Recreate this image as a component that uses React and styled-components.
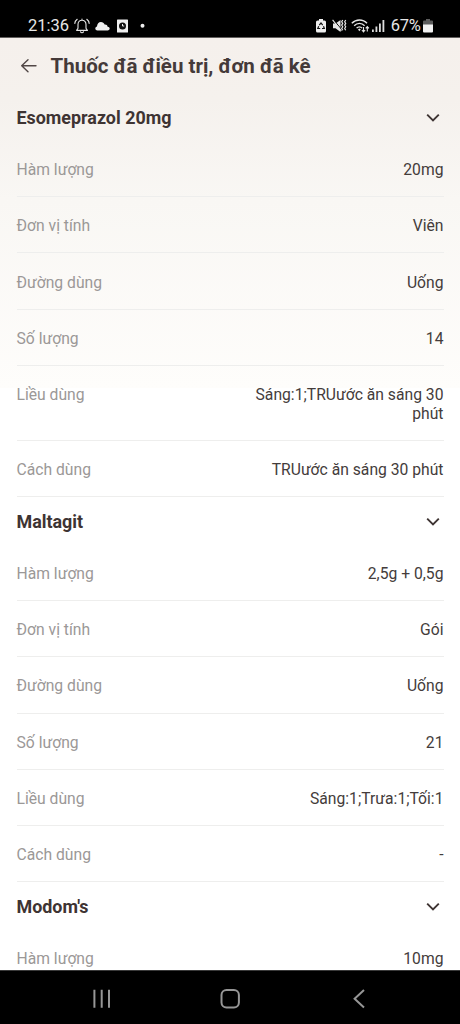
import React from 'react';
import styled, { createGlobalStyle } from 'styled-components';

const GlobalStyle = createGlobalStyle`
  body {
    margin: 0;
    background: #fff;
    font-family: Roboto, sans-serif;
  }
  * {
    box-sizing: border-box;
  }
`;

const Screen = styled.div`
  display: flex;
  flex-direction: column;
  height: 1024px;
  overflow: hidden;
  background: linear-gradient(#f5f0ec 38px, #f5f1ed 100px, #f9f7f4 200px, #fefdfb 388px, #fff 388px);
`;

const StatusBar = styled.div`
  display: flex;
  flex: none;
  justify-content: space-between;
  height: 38px;
  padding: 15px 27.5px 0 28px;
  background: #000;
  border-bottom: 1px solid #625f5e;
  color: #e6e6e6;
`;

const StatusGroup = styled.div`
  display: flex;
  align-items: center;
  height: 22px;
`;

const StatusText = styled.span`
  margin-left: ${({ $gap }) => $gap || 0}px;
  font-size: 16.5px;
  line-height: 22px;
  letter-spacing: ${({ $spacing }) => $spacing || '0'};
`;

const StatusIcon = styled.svg`
  flex: none;
  margin-left: ${({ $gap }) => $gap || 0}px;
`;

const TitleBar = styled.header`
  display: flex;
  flex: none;
  align-items: center;
  height: 55.3px;
  padding: 1px 16px 0 20px;
`;

const Title = styled.h1`
  margin: 0 0 0 12.5px;
  color: #443a39;
  font-size: 20.5px;
  font-weight: 700;
  line-height: 24px;
  white-space: nowrap;
`;

const List = styled.main`
  flex: 1;
  min-height: 0;
  overflow: hidden;
  padding: 0 16.5px;
`;

const SectionHeader = styled.div`
  display: flex;
  align-items: center;
  justify-content: space-between;
  height: 47.5px;
  padding: 2.4px 3.5px 0 0;
`;

const SectionName = styled.h2`
  margin: 0;
  color: #3e3433;
  font-size: 17.9px;
  font-weight: 700;
  line-height: 20px;
`;

const Row = styled.div`
  display: flex;
  justify-content: space-between;
  padding: 20.2px 0 16.4px;
  border-bottom: 1px solid #eeeeed;
  font-size: 15.7px;
  line-height: 18.7px;
`;

const Label = styled.span`
  color: #9b9897;
`;

const Value = styled.span`
  max-width: 200px;
  color: #443c3b;
  text-align: right;
`;

const NavBar = styled.nav`
  display: flex;
  flex: none;
  align-items: center;
  justify-content: space-between;
  height: 54px;
  padding: 2px 90px 0;
  background: #000;
  border-top: 1px solid #3a3a3a;
`;

const medicines = [
  {
    name: 'Esomeprazol 20mg',
    rows: [
      ['Hàm lượng', '20mg'],
      ['Đơn vị tính', 'Viên'],
      ['Đường dùng', 'Uống'],
      ['Số lượng', '14'],
      ['Liều dùng', 'Sáng:1;TRUước ăn sáng 30 phút'],
      ['Cách dùng', 'TRUước ăn sáng 30 phút'],
    ],
  },
  {
    name: 'Maltagit',
    rows: [
      ['Hàm lượng', '2,5g + 0,5g'],
      ['Đơn vị tính', 'Gói'],
      ['Đường dùng', 'Uống'],
      ['Số lượng', '21'],
      ['Liều dùng', 'Sáng:1;Trưa:1;Tối:1'],
      ['Cách dùng', '-'],
    ],
  },
  {
    name: "Modom's",
    rows: [['Hàm lượng', '10mg']],
  },
];

const BellIcon = () => (
  <StatusIcon $gap={5} width="16" height="16" viewBox="0 0 16 16" fill="none" stroke="#e6e6e6" strokeWidth="1.1" strokeLinecap="round" strokeLinejoin="round">
    <path d="M2.6 12.4h10.8L12 10.3V6.6C12 4 10.4 2.3 8 2.3S4 4 4 6.6v3.7zM8 2.3V1M6.5 13.7c.5 1.3 2.5 1.3 3 0" />
    <path d="M3.2 1.3C1.7 2.4.9 3.7.8 5.4M12.8 1.3c1.5 1.1 2.3 2.4 2.4 4.1" />
  </StatusIcon>
);

const CloudIcon = () => (
  <StatusIcon $gap={5} width="15" height="16" viewBox="0 0 15 16" fill="#eeeeee">
    <path d="M2.5 12.5C1 12.5.3 11.6.3 10.6S1.1 8.8 2 8.6C2.1 5.8 3.7 4 5.9 4c1.8 0 3.1 1 3.7 2.6 1.7-.2 2.8.7 3 2.1 1.3.1 2.1.9 2.1 1.9s-.8 1.9-2.1 1.9z" />
  </StatusIcon>
);

const ClockCardIcon = () => (
  <StatusIcon $gap={6.5} width="11" height="16" viewBox="0 0 11 16">
    <rect y="1.5" width="11" height="13" rx=".6" fill="#eeeeee" />
    <circle cx="5.5" cy="8" r="3.5" fill="#111" />
    <path d="M5.5 6v2h1.7" fill="none" stroke="#eee" strokeWidth="1" />
  </StatusIcon>
);

const DotIcon = () => (
  <StatusIcon $gap={12} width="5" height="16" viewBox="0 0 5 16">
    <circle cx="2.5" cy="7.8" r="2" fill="#eeeeee" />
  </StatusIcon>
);

const RecycleBatteryIcon = () => (
  <StatusIcon width="10" height="16" viewBox="0 0 10 16">
    <path d="M3 1h4v1.4h1.5q1.5 0 1.5 1.5v9q0 1.5-1.5 1.5h-7Q0 14.4 0 12.9v-9q0-1.5 1.5-1.5H3z" fill="#eeeeee" />
    <path d="M3.3 7.2 5 4.9l1.7 2.3M7.5 8.3l.8 2.2H6M4.2 10.5H1.8l.9-2.2" fill="none" stroke="#111" strokeWidth="1.2" />
  </StatusIcon>
);

const MuteVibrateIcon = () => (
  <StatusIcon $gap={6} width="15" height="16" viewBox="0 0 15 16" fill="none" stroke="#e6e6e6">
    <path d="M1 5.5h2.5L8.5 2v12l-5-3.7H1z" fill="#e6e6e6" stroke="none" />
    <path d="M1.7 1.8 10 12" stroke="#000" strokeWidth="1" />
    <path d="M.6 1.9 9.4 13" strokeWidth="1.1" />
    <path d="m10.7 2-1 1.7 1 1.7-1 1.7 1 1.7-1 1.7 1 1.7M13.7 2l-1 1.7 1 1.7-1 1.7 1 1.7-1 1.7 1 1.7" strokeWidth="1.2" />
  </StatusIcon>
);

const WifiIcon = () => (
  <StatusIcon $gap={4} width="19" height="16" viewBox="0 0 19 16" fill="none" stroke="#e6e6e6" strokeWidth="1.4">
    <path d="M.8 5.3C5 .9 12 .9 16 5.3M3.2 7.7c2.9-3.1 7.5-3.1 10.4 0M5.6 10.1c1.5-1.7 4-1.7 5.5 0" />
    <path d="m7 11.5 1.4-1 1.4 1-1.4 1.7z" fill="#e6e6e6" stroke="none" />
    <path d="M12.5 9v4.5M10.9 12l1.6 1.8 1.6-1.8M16.3 13.5V8.7M14.7 10.4l1.6-1.8 1.6 1.8" strokeWidth="1.1" />
  </StatusIcon>
);

const SignalIcon = () => (
  <StatusIcon $gap={2} width="13" height="16" viewBox="0 0 13 16" fill="#dddddd">
    <rect x="0" y="11.5" width="1.8" height="2.5" />
    <rect x="3.5" y="8.5" width="1.8" height="5.5" />
    <rect x="7" y="5.5" width="1.8" height="8.5" />
    <rect x="10.5" y="2" width="1.8" height="12" />
  </StatusIcon>
);

const BatteryIcon = () => (
  <StatusIcon $gap={2} width="10" height="16" viewBox="0 0 10 16">
    <path d="M3 1h4v1.5h2q1 0 1 1V7H0V3.5q0-1 1-1h2z" fill="#5c5c5c" />
    <path d="M0 6.5h10v6.9q0 1-1 1H1q-1 0-1-1z" fill="#f2f2f2" />
  </StatusIcon>
);

const BackArrow = () => (
  <svg width="18" height="18" viewBox="0 0 18 18" fill="none" stroke="#514746" strokeWidth="1.4" strokeLinecap="round" strokeLinejoin="round">
    <path d="M16 8.7H1.7M8 2.7 1.7 8.7l6.3 6" />
  </svg>
);

const Chevron = () => (
  <svg width="14" height="10" viewBox="0 0 14 10" fill="none" stroke="#3e3433" strokeWidth="1.9">
    <path d="m1.2 1.6 5.8 5.8 5.8-5.8" />
  </svg>
);

const RecentsIcon = () => (
  <svg width="24" height="24" viewBox="0 0 24 24" stroke="#969696" strokeWidth="2">
    <path d="M4.4 2.7v18M11.7 2.7v18M19 2.7v18" />
  </svg>
);

const HomeIcon = () => (
  <svg width="24" height="24" viewBox="0 0 24 24" fill="none" stroke="#969696" strokeWidth="2">
    <rect x="3.5" y="2.9" width="17.4" height="17.6" rx="5" />
  </svg>
);

const NavBackIcon = () => (
  <svg width="24" height="24" viewBox="0 0 24 24" fill="none" stroke="#969696" strokeWidth="2">
    <path d="M18 3.1 8.6 11.8 18 20.5" />
  </svg>
);

const Medicine = ({ name, rows }) => (
  <section>
    <SectionHeader>
      <SectionName>{name}</SectionName>
      <Chevron />
    </SectionHeader>
    {rows.map(([label, value]) => (
      <Row key={label}>
        <Label>{label}</Label>
        <Value>{value}</Value>
      </Row>
    ))}
  </section>
);

const App = () => {
  return (
    <>
      <GlobalStyle />
      <Screen>
        <StatusBar>
          <StatusGroup>
            <StatusText>21:36</StatusText>
            <BellIcon />
            <CloudIcon />
            <ClockCardIcon />
            <DotIcon />
          </StatusGroup>
          <StatusGroup>
            <RecycleBatteryIcon />
            <MuteVibrateIcon />
            <WifiIcon />
            <SignalIcon />
            <StatusText $gap={5.5} $spacing="-0.3px">67%</StatusText>
            <BatteryIcon />
          </StatusGroup>
        </StatusBar>
        <TitleBar>
          <BackArrow />
          <Title>Thuốc đã điều trị, đơn đã kê</Title>
        </TitleBar>
        <List>
          {medicines.map((medicine) => (
            <Medicine key={medicine.name} {...medicine} />
          ))}
        </List>
        <NavBar>
          <RecentsIcon />
          <HomeIcon />
          <NavBackIcon />
        </NavBar>
      </Screen>
    </>
  );
};

export default App;
